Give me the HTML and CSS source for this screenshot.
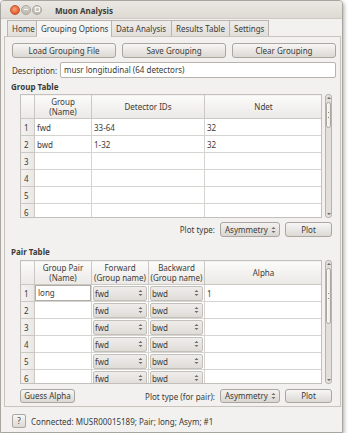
FILE: index.html
```html
<!DOCTYPE html>
<html>
<head>
<meta charset="utf-8">
<link rel="stylesheet" href="styles.css">
</head>
<body>
<div class="window">
  <div class="titlebar">
    <span class="wbtn close"></span>
    <span class="wbtn min"><span class="dash"></span></span>
    <span class="wbtn max"><span class="sq"></span></span>
    <span class="title">Muon Analysis</span>
  </div>
  <div class="tabs">
    <div class="tab">Home</div>
    <div class="tab active">Grouping Options</div>
    <div class="tab">Data Analysis</div>
    <div class="tab">Results Table</div>
    <div class="tab">Settings</div>
  </div>
  <div class="pane">
    <div class="btnrow">
      <div class="btn wide">Load Grouping File</div>
      <div class="btn wide">Save Grouping</div>
      <div class="btn wide">Clear Grouping</div>
    </div>
    <div class="desc">
      <span class="label">Description:</span>
      <div class="input">musr longitudinal (64 detectors)</div>
    </div>
    <div class="section">Group Table</div>
    <div class="tablewrap">
      <div class="view">
      <table class="grid group">
        <colgroup><col class="c-num"><col class="c57"><col class="c113"><col class="c118"></colgroup>
        <thead><tr><th></th><th>Group<br>(Name)</th><th>Detector IDs</th><th>Ndet</th></tr></thead>
        <tbody>
          <tr><td class="num">1</td><td>fwd</td><td>33-64</td><td>32</td></tr>
          <tr><td class="num">2</td><td>bwd</td><td>1-32</td><td>32</td></tr>
          <tr><td class="num">3</td><td></td><td></td><td></td></tr>
          <tr><td class="num">4</td><td></td><td></td><td></td></tr>
          <tr><td class="num">5</td><td></td><td></td><td></td></tr>
          <tr><td class="num">6</td><td></td><td></td><td></td></tr>
        </tbody>
      </table>
      </div>
      <div class="scrollbar">
        <div class="arrow up"></div>
        <div class="track"><div class="thumb short"><span class="grip"></span></div></div>
        <div class="arrow down"></div>
      </div>
    </div>
    <div class="plotrow">
      <span class="plabel">Plot type:</span>
      <div class="combo"><span>Asymmetry</span><svg class="spin" width="5" height="8" viewBox="0 0 5 8"><path d="M0.5 3 L2.5 1 L4.5 3 Z M0.5 5 L2.5 7 L4.5 5 Z" fill="#6f6b66"/></svg></div>
      <div class="btn plot">Plot</div>
    </div>
    <div class="section pair">Pair Table</div>
    <div class="tablewrap">
      <div class="view">
      <table class="grid pairt">
        <colgroup><col class="c-num"><col class="c57"><col class="c57"><col class="c56"><col class="c118"></colgroup>
        <thead><tr><th></th><th>Group Pair<br>(Name)</th><th>Forward<br>(Group name)</th><th>Backward<br>(Group name)</th><th>Alpha</th></tr></thead>
        <tbody>
          <tr><td class="num">1</td><td class="edit"><div class="editor">long</div></td><td class="cc"><div class="combo cell"><span>fwd</span><svg class="spin" width="5" height="8" viewBox="0 0 5 8"><path d="M0.5 3 L2.5 1 L4.5 3 Z M0.5 5 L2.5 7 L4.5 5 Z" fill="#6f6b66"/></svg></div></td><td class="cc"><div class="combo cell"><span>bwd</span><svg class="spin" width="5" height="8" viewBox="0 0 5 8"><path d="M0.5 3 L2.5 1 L4.5 3 Z M0.5 5 L2.5 7 L4.5 5 Z" fill="#6f6b66"/></svg></div></td><td>1</td></tr>
          <tr><td class="num">2</td><td></td><td class="cc"><div class="combo cell"><span>fwd</span><svg class="spin" width="5" height="8" viewBox="0 0 5 8"><path d="M0.5 3 L2.5 1 L4.5 3 Z M0.5 5 L2.5 7 L4.5 5 Z" fill="#6f6b66"/></svg></div></td><td class="cc"><div class="combo cell"><span>bwd</span><svg class="spin" width="5" height="8" viewBox="0 0 5 8"><path d="M0.5 3 L2.5 1 L4.5 3 Z M0.5 5 L2.5 7 L4.5 5 Z" fill="#6f6b66"/></svg></div></td><td></td></tr>
          <tr><td class="num">3</td><td></td><td class="cc"><div class="combo cell"><span>fwd</span><svg class="spin" width="5" height="8" viewBox="0 0 5 8"><path d="M0.5 3 L2.5 1 L4.5 3 Z M0.5 5 L2.5 7 L4.5 5 Z" fill="#6f6b66"/></svg></div></td><td class="cc"><div class="combo cell"><span>bwd</span><svg class="spin" width="5" height="8" viewBox="0 0 5 8"><path d="M0.5 3 L2.5 1 L4.5 3 Z M0.5 5 L2.5 7 L4.5 5 Z" fill="#6f6b66"/></svg></div></td><td></td></tr>
          <tr><td class="num">4</td><td></td><td class="cc"><div class="combo cell"><span>fwd</span><svg class="spin" width="5" height="8" viewBox="0 0 5 8"><path d="M0.5 3 L2.5 1 L4.5 3 Z M0.5 5 L2.5 7 L4.5 5 Z" fill="#6f6b66"/></svg></div></td><td class="cc"><div class="combo cell"><span>bwd</span><svg class="spin" width="5" height="8" viewBox="0 0 5 8"><path d="M0.5 3 L2.5 1 L4.5 3 Z M0.5 5 L2.5 7 L4.5 5 Z" fill="#6f6b66"/></svg></div></td><td></td></tr>
          <tr><td class="num">5</td><td></td><td class="cc"><div class="combo cell"><span>fwd</span><svg class="spin" width="5" height="8" viewBox="0 0 5 8"><path d="M0.5 3 L2.5 1 L4.5 3 Z M0.5 5 L2.5 7 L4.5 5 Z" fill="#6f6b66"/></svg></div></td><td class="cc"><div class="combo cell"><span>bwd</span><svg class="spin" width="5" height="8" viewBox="0 0 5 8"><path d="M0.5 3 L2.5 1 L4.5 3 Z M0.5 5 L2.5 7 L4.5 5 Z" fill="#6f6b66"/></svg></div></td><td></td></tr>
          <tr><td class="num">6</td><td></td><td class="cc"><div class="combo cell"><span>fwd</span><svg class="spin" width="5" height="8" viewBox="0 0 5 8"><path d="M0.5 3 L2.5 1 L4.5 3 Z M0.5 5 L2.5 7 L4.5 5 Z" fill="#6f6b66"/></svg></div></td><td class="cc"><div class="combo cell"><span>bwd</span><svg class="spin" width="5" height="8" viewBox="0 0 5 8"><path d="M0.5 3 L2.5 1 L4.5 3 Z M0.5 5 L2.5 7 L4.5 5 Z" fill="#6f6b66"/></svg></div></td><td></td></tr>
        </tbody>
      </table>
      </div>
      <div class="scrollbar">
        <div class="arrow up"></div>
        <div class="track"><div class="thumb long"><span class="grip"></span></div></div>
        <div class="arrow down"></div>
      </div>
    </div>
    <div class="plotrow guessrow">
      <div class="btn guess">Guess Alpha</div>
      <span class="spacer"></span>
      <span class="plabel">Plot type (for pair):</span>
      <div class="combo"><span>Asymmetry</span><svg class="spin" width="5" height="8" viewBox="0 0 5 8"><path d="M0.5 3 L2.5 1 L4.5 3 Z M0.5 5 L2.5 7 L4.5 5 Z" fill="#6f6b66"/></svg></div>
      <div class="btn plot">Plot</div>
    </div>
  </div>
  <div class="status">
    <div class="btn help">?</div>
    <span class="stext">Connected: MUSR00015189; Pair; long; Asym; #1</span>
  </div>
</div>
</body>
</html>
```
FILE: styles.css
```css
html, body {
  margin: 0;
  padding: 0;
  background: #ffffff;
}
body {
  font-family: "Noto Sans", "DejaVu Sans", sans-serif;
  font-size: 8px;
  color: #3c3b37;
}
.window {
  width: 341px;
  height: 431px;
  border: 1px solid #a8a49e;
  border-radius: 4px 4px 0 0;
  background: #f2f1f0;
  box-shadow: 1px 2px 4px rgba(0,0,0,0.35);
  overflow: hidden;
}
.titlebar {
  height: 18px;
  display: flex;
  align-items: center;
  padding-left: 9px;
  background: linear-gradient(#ebe8e4, #dedad3);
  border-bottom: 1px solid #cfcbc4;
  box-sizing: border-box;
}
.wbtn {
  width: 8px;
  height: 8px;
  border-radius: 50%;
  margin-right: 1px;
  display: flex;
  align-items: center;
  justify-content: center;
  background: linear-gradient(#d6d3ce, #bdb9b2);
  border: 0.5px solid #aaa59e;
}
.wbtn.close {
  background: radial-gradient(circle at 45% 40%, #f8a47c, #e35c2c 70%);
  border-color: #c4532b;
}
.dash { width: 4px; height: 1px; background: #f6f4f1; }
.sq { width: 3px; height: 3px; border: 1px solid #f6f4f1; }
.title {
  font-weight: bold;
  margin-left: 12px;
  font-size: 8px;
  color: #3c3b37;
  padding-top: 1px;
}
.tabs {
  display: flex;
  height: 16px;
  margin-top: 1px;
  padding-left: 6px;
}
.tab {
  height: 16px;
  box-sizing: border-box;
  border: 1px solid #b9b5ae;
  border-bottom: none;
  border-left: none;
  background: linear-gradient(#eeecea, #e2dfdb);
  padding: 0 4px;
  line-height: 15px;
  white-space: nowrap;
}
.tab:first-child { border-left: 1px solid #b9b5ae; }
.tab:nth-child(1) { width: 30px; }
.tab:nth-child(2) { width: 75px; }
.tab:nth-child(3) { width: 60px; }
.tab:nth-child(4) { width: 58px; }
.tab:nth-child(5) { width: 39px; }
.tab.active {
  background: #f6f5f4;
  height: 17px;
  margin-bottom: -1px;
}
.pane {
  margin-left: 3px;
  width: 337px;
  box-sizing: border-box;
  border: 1px solid #c7c3bd;
  padding: 0 4px 3px 7px;
}
.btnrow {
  display: flex;
  gap: 6px;
  margin-top: 6px;
}
.btn {
  height: 15px;
  box-sizing: border-box;
  border: 1px solid #aaa6a0;
  border-radius: 3px;
  background: linear-gradient(#f7f6f5, #dcd9d4);
  text-align: center;
  line-height: 13px;
  white-space: nowrap;
}
.btn.wide { width: 104px; }
.desc {
  display: flex;
  align-items: center;
  margin-top: 4px;
  height: 16px;
}
.label { width: 48px; }
.input {
  flex: 1;
  height: 16px;
  box-sizing: border-box;
  border: 1px solid #b7b3ad;
  border-radius: 2px;
  background: #ffffff;
  line-height: 14px;
  padding-left: 3px;
}
.section {
  font-weight: bold;
  margin-top: 4px;
  height: 10px;
  line-height: 10px;
  margin-left: -1px;
}
.section.pair { margin-top: 10px; }
.tablewrap {
  display: flex;
  margin-left: 8px;
  margin-top: 2px;
  height: 124px;
  gap: 3px;
}
.section.pair + .tablewrap { margin-top: 3px; }
.view {
  width: 302px;
  height: 124px;
  overflow: hidden;
  box-sizing: border-box;
  border: 1px solid #c3c0bb;
  background: #ffffff;
}
.grid {
  width: 302px;
  margin: -1px 0 0 -1px;
  table-layout: fixed;
  border-collapse: collapse;
  background: #ffffff;
}
.c-num { width: 14px; }
.c57 { width: 57px; }
.c56 { width: 56px; }
.c113 { width: 113px; }
.c118 { width: 118px; }
.grid th {
  height: 24px;
  box-sizing: border-box;
  padding: 0;
  font-weight: normal;
  line-height: 10px;
  background: linear-gradient(#fbfbfa, #ebe9e6);
  border: 1px solid #cbc8c3;
  text-align: center;
  vertical-align: middle;
}
.grid td {
  height: 17px;
  box-sizing: border-box;
  padding: 0 0 0 2px;
  border: 1px solid #d6d4d0;
  white-space: nowrap;
  overflow: hidden;
  line-height: 15px;
}
.grid td.num {
  background: linear-gradient(90deg, #f4f3f1, #e9e7e4);
  padding-left: 3px;
  border-color: #cbc8c3;
}
.grid td.cc { padding: 0 1px; }
.grid td.edit { padding: 0; }
.editor {
  height: 16px;
  box-sizing: border-box;
  border: 1px solid #b0aca6;
  padding-left: 2px;
  line-height: 14px;
  background: #ffffff;
}
.combo {
  width: 60px;
  height: 15px;
  box-sizing: border-box;
  border: 1px solid #aaa6a0;
  border-radius: 3px;
  background: linear-gradient(#f3f2f0, #d9d6d1);
  display: flex;
  align-items: center;
  justify-content: space-between;
  padding: 0 3px 0 4px;
  line-height: 13px;
}
.combo.cell {
  width: auto;
  height: 15px;
  border-radius: 2px;
  padding-left: 1px;
  border-color: #c3bfb9;
  background: linear-gradient(#efedeb, #dfdcd8);
}
.scrollbar {
  width: 7px;
  height: 124px;
  box-sizing: border-box;
  border: 1px solid #b9b5ae;
  border-radius: 3px;
  background: #e2dfdb;
  display: flex;
  flex-direction: column;
  align-items: center;
}
.arrow {
  width: 0;
  height: 0;
  border-left: 2px solid transparent;
  border-right: 2px solid transparent;
}
.arrow.up { border-bottom: 2px solid #6f6b66; margin-top: 2px; }
.arrow.down { border-top: 2px solid #6f6b66; margin-bottom: 2px; }
.track {
  flex: 1;
  width: 100%;
  padding-top: 3px;
}
.thumb {
  width: 5px;
  box-sizing: border-box;
  border: 1px solid #aaa6a0;
  border-radius: 3px;
  background: linear-gradient(90deg, #fafaf9, #eceae7);
  display: flex;
  align-items: center;
  justify-content: center;
}
.thumb.short { height: 26px; }
.thumb.long { height: 56px; }
.grip {
  width: 1px;
  height: 4px;
  border-top: 1px dotted #8a867f;
  border-bottom: 1px dotted #8a867f;
}
.plotrow {
  display: flex;
  align-items: center;
  justify-content: flex-end;
  height: 15px;
  margin-top: 4px;
  padding-right: 4px;
}
.plabel { margin-right: 5px; }
.btn.plot { width: 47px; margin-left: 5px; }
.guessrow {
  margin-top: 5px;
  height: 14px;
}
.spacer { flex: 1; }
.btn.guess {
  width: 55px;
  height: 14px;
  margin-left: 8px;
  line-height: 12px;
}
.guessrow .combo, .guessrow .btn.plot { height: 14px; line-height: 12px; }
.status {
  display: flex;
  align-items: center;
  margin-top: 7px;
  padding-left: 11px;
  height: 14px;
}
.btn.help {
  width: 14px;
  height: 14px;
  line-height: 12px;
  border-radius: 2px;
}
.stext { margin-left: 5px; }
```
